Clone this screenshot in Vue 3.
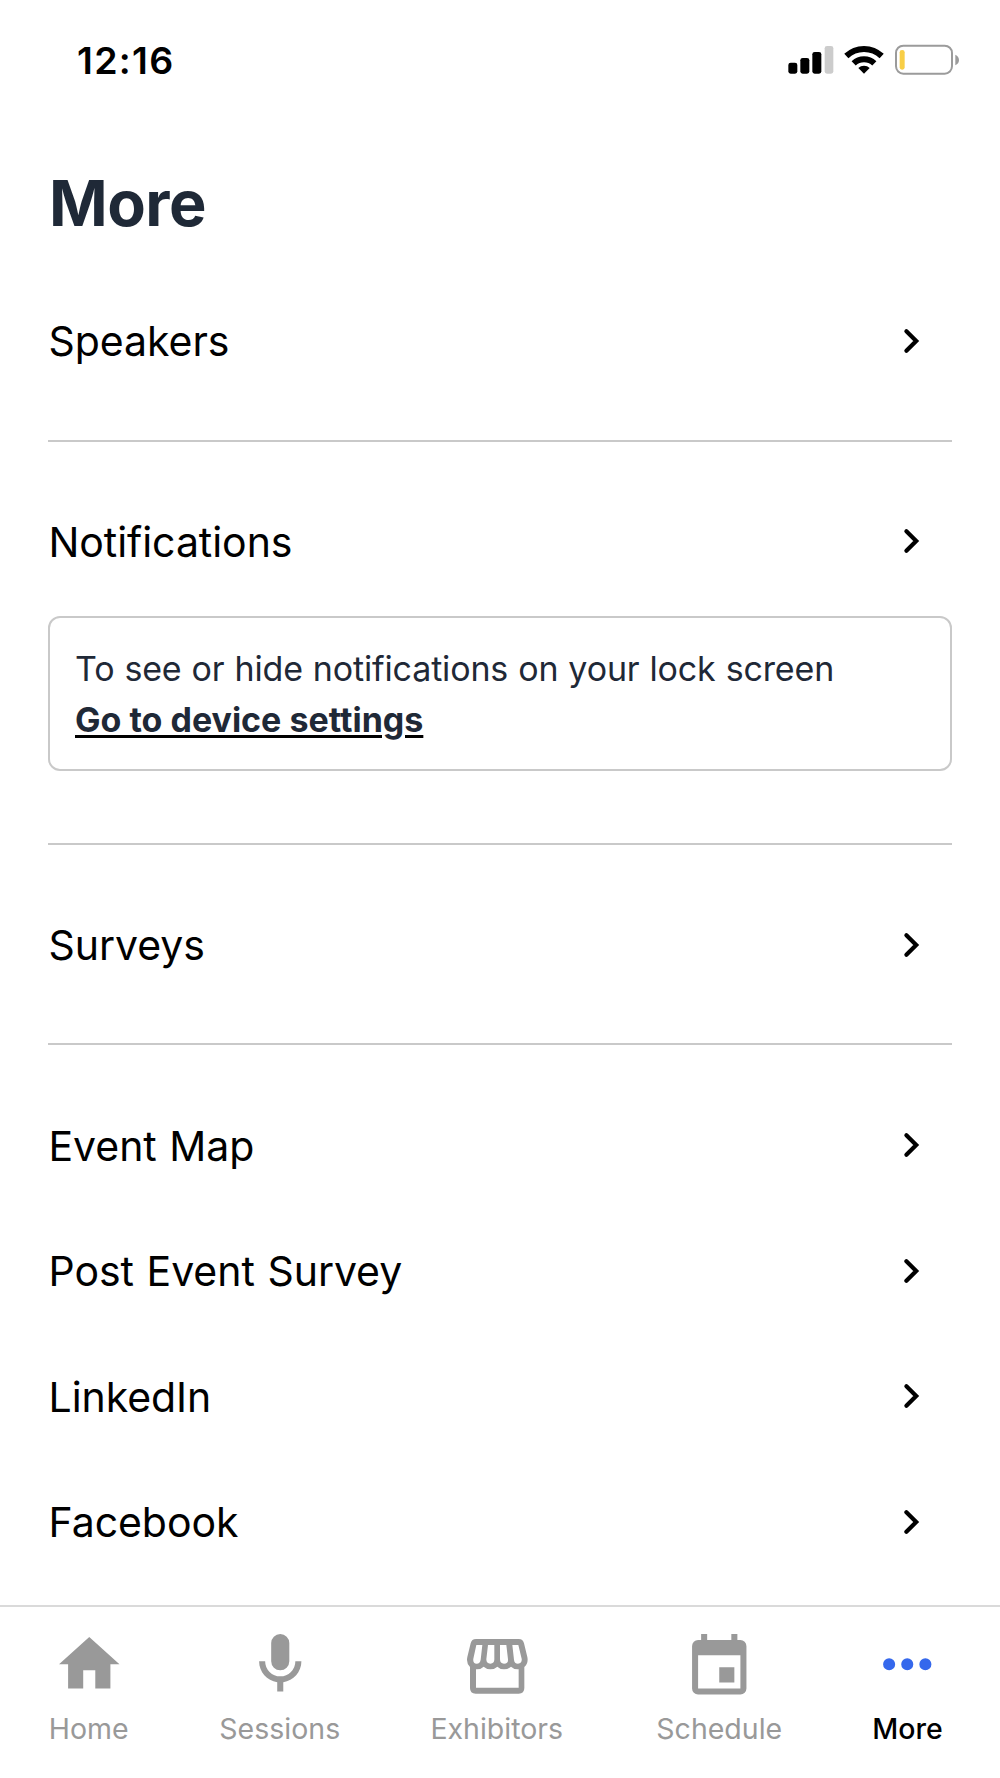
<script setup>
const groups = [
  [{ label: 'Speakers' }],
  [{ label: 'Notifications', notice: true }],
  [{ label: 'Surveys' }],
  [{ label: 'Event Map' }, { label: 'Post Event Survey' }, { label: 'LinkedIn' }, { label: 'Facebook' }],
]

const tabs = [
  { label: 'Home', viewBox: '0 0 24 24', path: 'M10 20v-6h4v6h5v-8h3L12 3 2 12h3v8z' },
  {
    label: 'Sessions',
    viewBox: '0 0 24 24',
    path: 'M12 2a3 3 0 0 1 3 3v6a3 3 0 0 1-6 0V5a3 3 0 0 1 3-3M19 11c0 3.53-2.61 6.44-6 6.93V21h-2v-3.07C7.61 17.44 5 14.53 5 11h2a5 5 0 0 0 10 0z',
  },
  {
    label: 'Exhibitors',
    viewBox: '184 85 217.5 217.5',
    path: 'M229 118H357Q370 118 373 131L383 172Q387 190 374 202V265Q374 282 357 282H228Q211 282 211 265V202Q199 190 203 172L213 131Q216 118 229 118ZM230 136L221 177Q219 192 231 192Q241 192 243 180L248 136ZM265 136L260 179Q260 192 272 192Q284 192 284 179V136ZM301 136V179Q301 192 313 192Q326 192 325 179L320 136ZM338 136L343 180Q344 192 355 192Q368 191 366 177L356 136ZM229 209V264H357V209Q343 210 334 201Q325 209 313 209Q301 209 293 201Q285 209 272 209Q261 209 252 201Q243 210 229 209Z',
  },
  {
    label: 'Schedule',
    viewBox: '0 0 24 24',
    path: 'M19 4h-1V2h-2v2H8V2H6v2H5a2 2 0 0 0-2 2v14a2 2 0 0 0 2 2h14a2 2 0 0 0 2-2V6a2 2 0 0 0-2-2M19 20H5V9h14zM12 13h5v5h-5z',
  },
  {
    label: 'More',
    viewBox: '0 0 24 24',
    path: 'M4 12a2 2 0 1 0 4 0a2 2 0 1 0-4 0M10 12a2 2 0 1 0 4 0a2 2 0 1 0-4 0M16 12a2 2 0 1 0 4 0a2 2 0 1 0-4 0',
    active: true,
  },
]
</script>

<template>
  <div class="screen">
    <header class="status">
      <span class="time">12:16</span>
      <svg class="indicators" viewBox="0 0 630 180" aria-hidden="true">
        <rect x="55" y="98" width="27" height="33" rx="7" />
        <rect x="91" y="84" width="27" height="47" rx="7" />
        <rect x="127" y="66" width="27" height="65" rx="7" />
        <rect x="164" y="48" width="26" height="83" rx="7" fill="#ccc" />
        <path d="M282 131L265 114A24 24 0 0 1 299 114Z" />
        <path d="M251 100A45 45 0 0 1 313 100M229 78A76.5 76.5 0 0 1 335 78" fill="none" stroke="#000" stroke-width="18" />
        <rect x="378" y="47" width="168" height="84" rx="22" fill="none" stroke="#9b9b9b" stroke-width="6" />
        <rect x="389" y="60" width="15" height="59" rx="7" fill="#f8ce46" />
        <path d="M556 74Q567 79 567 90T556 106Z" fill="#9b9b9b" />
      </svg>
    </header>

    <main class="content">
      <h1>More</h1>
      <section v-for="(group, i) in groups" :key="i" class="group">
        <template v-for="item in group" :key="item.label">
          <a class="row">
            <span>{{ item.label }}</span>
            <svg class="chevron" viewBox="0 0 20 28" aria-hidden="true">
              <path d="M5.4 4.3L15.2 14L5.4 23.7" />
            </svg>
          </a>
          <div v-if="item.notice" class="notice">
            <p>To see or hide notifications on your lock screen</p>
            <a class="settings">Go to device settings</a>
          </div>
        </template>
      </section>
    </main>

    <nav class="tabs">
      <a v-for="tab in tabs" :key="tab.label" class="tab" :class="{ active: tab.active }">
        <svg :viewBox="tab.viewBox" aria-hidden="true">
          <path :d="tab.path" fill-rule="evenodd" />
        </svg>
        <span>{{ tab.label }}</span>
      </a>
    </nav>
  </div>
</template>

<style>
body {
  margin: 0;
  background: #fff;
}
</style>

<style scoped>
.screen {
  display: flex;
  flex-direction: column;
  width: 1000px;
  height: 1778px;
  overflow: hidden;
  background: #fff;
  color: #000;
  font-family: Inter, 'Liberation Sans', sans-serif;
}

.status {
  display: flex;
  flex: none;
  align-items: center;
  justify-content: space-between;
  height: 120px;
  padding: 0 20px 0 77px;
}

.time {
  padding-top: 1px;
  font-size: 37.5px;
  font-weight: 600;
  line-height: 44px;
  letter-spacing: 1.3px;
}

.indicators {
  width: 210px;
  height: 60px;
}

.content {
  flex: 1;
  min-height: 0;
  padding: 0 48px;
}

h1 {
  margin: 0;
  padding: 45px 0 37px 1px;
  color: #1f2937;
  font-size: 63px;
  font-weight: 700;
  line-height: 76px;
  letter-spacing: -0.5px;
}

.group + .group {
  margin-top: 36px;
  padding-top: 36.8px;
  border-top: 2px solid #c9c9c9;
}

.row {
  display: flex;
  align-items: center;
  justify-content: space-between;
  height: 125.6px;
  padding: 0 31px 0 0.5px;
  font-size: 41px;
  letter-spacing: -0.05px;
  word-spacing: 1.2px;
}

.row span {
  padding-top: 1px;
}

.chevron {
  width: 20px;
  height: 28px;
}

.chevron path {
  fill: none;
  stroke: #000;
  stroke-linecap: round;
  stroke-width: 4.2;
}

.notice {
  box-sizing: border-box;
  height: 154.6px;
  margin: 12px 0 72.5px;
  padding: 26px 25px 0;
  border: 2px solid #c9c9c9;
  border-radius: 12px;
  color: #1f2937;
  font-size: 34px;
  line-height: 50.7px;
}

.notice p {
  margin: 0;
  letter-spacing: -0.15px;
  word-spacing: 0.6px;
  white-space: nowrap;
}

.settings {
  font-weight: 700;
  text-decoration: underline #000 3px;
  text-underline-offset: 3px;
}

.tabs {
  display: grid;
  flex: none;
  box-sizing: border-box;
  grid-template-columns: 177.5px 204.5px 229.5px 215.5px 161px;
  height: 173px;
  padding-top: 21px;
  border-top: 2px solid #dadada;
}

.tab {
  display: flex;
  flex-direction: column;
  align-items: center;
  color: #999;
  font-size: 28.5px;
}

.tab svg {
  width: 72.5px;
  height: 72.5px;
  fill: currentColor;
}

.tab span {
  margin-top: 10px;
  line-height: 36px;
}

.tab.active {
  color: #000;
  font-weight: 500;
}

.tab.active svg {
  fill: #3568ec;
}
</style>
